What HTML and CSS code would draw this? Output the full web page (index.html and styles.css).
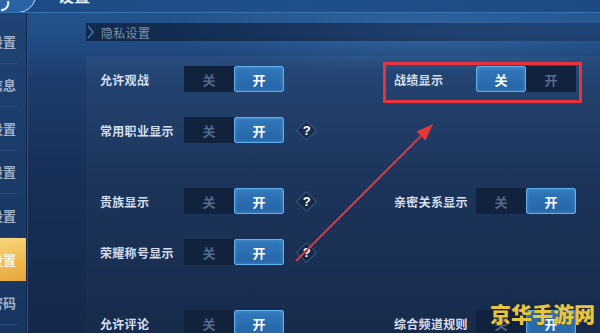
FILE: index.html
```html
<!DOCTYPE html>
<html lang="zh">
<head>
<meta charset="utf-8">
<title>设置</title>
<link rel="stylesheet" href="styles.css">
</head>
<body>
<div class="app">
  <header class="topbar">
    <svg class="back" width="36" height="13" viewBox="0 0 36 13">
      <path d="M0 0 H35 Q31 11 19 12.5 H0 Z" fill="#2a63a6"/>
      <path d="M8 12.5 H19 Q31 11 35 0" fill="none" stroke="#cfe2f6" stroke-width="1"/>
      <path d="M1 10 A7 7 0 0 0 8 1" fill="none" stroke="#e8f1fb" stroke-width="2"/>
    </svg>
    <span class="title">设置</span>
  </header>
  <div class="body">
    <nav class="sidebar">
      <div class="tab">设置</div>
      <div class="tab">信息</div>
      <div class="tab">设置</div>
      <div class="tab">设置</div>
      <div class="tab">设置</div>
      <div class="tab active">设置</div>
      <div class="tab">密码</div>
    </nav>
    <main class="main">
      <div class="section-head">
        <svg class="chev" width="8" height="14" viewBox="0 0 8 14">
          <path d="M1 1 L6 7 L1 13" fill="none" stroke="#3f74a8" stroke-width="1.6"/>
        </svg>
        <span>隐私设置</span>
      </div>
      <div class="rows">
        <div class="row">
          <div class="cell">
            <span class="label">允许观战</span>
            <div class="toggle"><span class="seg">关</span><span class="seg on">开</span></div>
          </div>
          <div class="cell">
            <span class="label label-r">战绩显示</span>
            <div class="toggle"><span class="seg on">关</span><span class="seg">开</span></div>
          </div>
        </div>
        <div class="row gap-s">
          <div class="cell">
            <span class="label">常用职业显示</span>
            <div class="toggle"><span class="seg">关</span><span class="seg on">开</span></div>
            <span class="help"><b>?</b></span>
          </div>
          <div class="cell"></div>
        </div>
        <div class="row gap-l">
          <div class="cell">
            <span class="label">贵族显示</span>
            <div class="toggle"><span class="seg">关</span><span class="seg on">开</span></div>
            <span class="help"><b>?</b></span>
          </div>
          <div class="cell">
            <span class="label label-r">亲密关系显示</span>
            <div class="toggle"><span class="seg">关</span><span class="seg on">开</span></div>
          </div>
        </div>
        <div class="row gap-s">
          <div class="cell">
            <span class="label">荣耀称号显示</span>
            <div class="toggle"><span class="seg">关</span><span class="seg on">开</span></div>
            <span class="help"><b>?</b></span>
          </div>
          <div class="cell"></div>
        </div>
        <div class="row gap-l">
          <div class="cell">
            <span class="label">允许评论</span>
            <div class="toggle"><span class="seg">关</span><span class="seg on">开</span></div>
          </div>
          <div class="cell">
            <span class="label label-r">综合频道规则</span>
            <div class="toggle"><span class="seg">关</span><span class="seg on">开</span></div>
          </div>
        </div>
      </div>
    </main>
  </div>
  <div class="redbox"></div>
  <svg class="arrow" width="600" height="333" viewBox="0 0 600 333">
    <line x1="296" y1="261" x2="421" y2="136" stroke="#e8353a" stroke-width="2"/>
    <polygon points="433,124 416.5,131.5 425.5,140.5" fill="#e8353a"/>
  </svg>
  <div class="watermark">京华手游网</div>
</div>
</body>
</html>
```

FILE: styles.css
```css
* { box-sizing: border-box; }
html, body { margin: 0; padding: 0; }
body {
  width: 600px;
  height: 333px;
  overflow: hidden;
  font-family: "Noto Sans CJK SC", "Noto Sans", sans-serif;
  background: #152a4b;
}
.app {
  position: relative;
  width: 600px;
  height: 333px;
  overflow: hidden;
  display: flex;
  flex-direction: column;
  background:
    radial-gradient(ellipse 260px 40px at 420px 32px, rgba(80, 140, 210, 0.35), rgba(80, 140, 210, 0) 100%),
    linear-gradient(180deg, #25548c 0px, #22508a 30px, #1c3d6b 80px, #172f57 180px, #14284a 333px);
}
.topbar {
  height: 13px;
  flex: none;
  display: flex;
  align-items: flex-start;
  overflow: hidden;
  background: linear-gradient(90deg, #1d4a84, #1f4f8c 50%, #1d4a84);
  border-bottom: 1px solid #3a72b2;
}
.back { flex: none; display: block; }
.title {
  margin-left: 22px;
  margin-top: -12px;
  font-size: 16px;
  line-height: 15px;
  font-weight: 700;
  color: #e6eef8;
}
.body {
  flex: 1;
  display: flex;
  min-height: 0;
}
.sidebar {
  width: 27px;
  flex: none;
  padding-top: 7px;
  background: linear-gradient(180deg, #1e4374, #1a3a66 60%, #183560);
  border-right: 1px solid #11284a;
  box-shadow: 1px 0 0 #2b5283;
  display: flex;
  flex-direction: column;
  overflow: hidden;
}
.tab {
  height: 43.5px;
  flex: none;
  display: flex;
  align-items: center;
  justify-content: flex-end;
  font-size: 13px;
  font-weight: 700;
  color: #9fb1cb;
  white-space: nowrap;
  border-bottom: 1px solid #2a4c78;
  margin-right: 9px;
  padding-right: 1px;
}
.tab.active {
  margin-right: 0;
  padding-right: 10px;
  border-bottom: none;
  color: #fff6e0;
  background: linear-gradient(160deg, #f8d77c, #eeb84f 60%, #e5a53c);
}
.main {
  flex: 1;
  padding-left: 59px;
  padding-top: 10px;
}
.section-head {
  height: 18px;
  display: flex;
  align-items: center;
  background: linear-gradient(90deg, rgba(12, 28, 55, 0.75), rgba(14, 32, 62, 0.55) 60%, rgba(14, 32, 62, 0.35));
}
.chev { margin-left: 1px; flex: none; }
.section-head span {
  margin-left: 6px;
  font-size: 12px;
  color: #7f92ae;
  letter-spacing: 0.3px;
}
.rows {
  margin-top: 15px;
  padding-top: 10px;
  padding-left: 14px;
  background: linear-gradient(180deg, rgba(255, 255, 255, 0.035), rgba(255, 255, 255, 0.01));
  height: 300px;
}
.row {
  height: 26px;
  display: grid;
  grid-template-columns: 294px 1fr;
}
.gap-s { margin-top: 25px; }
.gap-l { margin-top: 45px; }
.cell {
  display: flex;
  align-items: center;
}
.label {
  width: 84px;
  flex: none;
  font-size: 12px;
  font-weight: 700;
  color: #d5dfed;
  letter-spacing: 0.3px;
  white-space: nowrap;
}
.label-r { width: 82px; }
.toggle {
  display: flex;
  width: 100px;
  height: 26px;
  flex: none;
  background: #11223f;
}
.seg {
  width: 50px;
  height: 26px;
  display: flex;
  align-items: center;
  justify-content: center;
  font-size: 13px;
  font-weight: 700;
  color: #55698a;
}
.seg.on {
  color: #ffffff;
  background: linear-gradient(180deg, #3179bb, #2464a5);
  border: 1px solid #5fb0ee;
  border-radius: 2px;
  box-shadow: inset 0 0 4px rgba(130, 200, 255, 0.35);
}
.help {
  width: 15px;
  height: 15px;
  flex: none;
  margin-left: 15px;
  transform: rotate(45deg);
  border: 1px solid #3a5d88;
  background: rgba(10, 24, 48, 0.4);
  display: flex;
  align-items: center;
  justify-content: center;
}
.help b {
  transform: rotate(-45deg);
  font-family: "Liberation Sans", "Noto Sans", sans-serif;
  font-size: 13px;
  font-weight: 700;
  color: #ffffff;
  line-height: 1;
}
.redbox {
  position: absolute;
  left: 383px;
  top: 62px;
  width: 199px;
  height: 41px;
  border: 3px solid #e8323c;
}
.arrow {
  position: absolute;
  left: 0;
  top: 0;
  pointer-events: none;
}
.watermark {
  position: absolute;
  left: 490px;
  top: 301px;
  font-size: 21px;
  line-height: 24px;
  font-weight: 900;
  color: #e7c540;
  white-space: nowrap;
  text-shadow: 0 0 2px rgba(20, 20, 10, 0.6);
}
```
